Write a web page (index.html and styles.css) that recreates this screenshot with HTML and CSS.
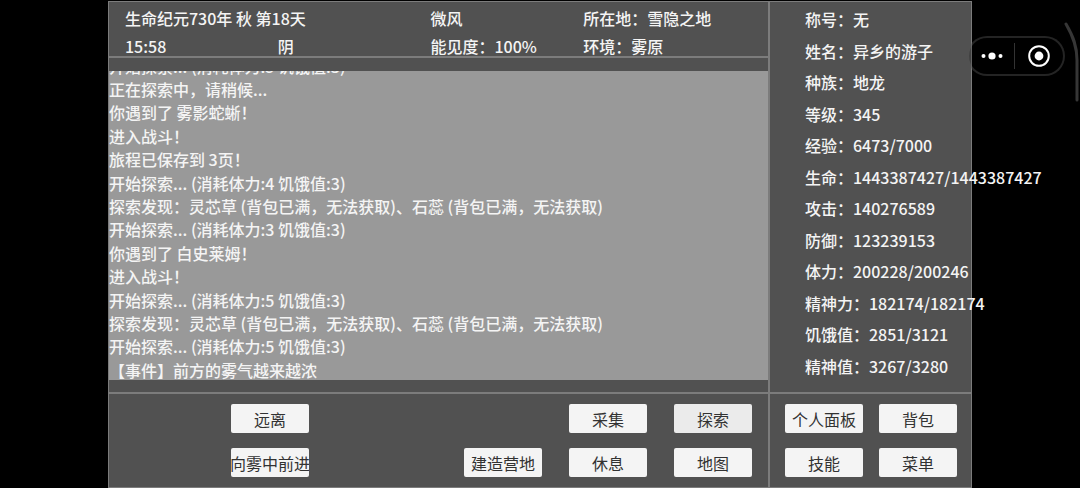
FILE: index.html
```
<!DOCTYPE html>
<html lang="zh-CN">
<head>
<meta charset="utf-8">
<title>生命纪元</title>
<link rel="stylesheet" href="styles.css">
</head>
<body>
<main class="game">
	<section class="world">
		<div class="status">
			<span class="date">生命纪元730年 秋 第18天</span>
			<span>微风</span>
			<span>所在地：雪隐之地</span>
			<span>15:58</span>
			<span>阴</span>
			<span>能见度：100%</span>
			<span>环境：雾原</span>
		</div>
		<div class="log">
			<ul>
				<li>开始探索... (消耗体力:5 饥饿值:3)</li>
				<li>正在探索中，请稍候...</li>
				<li>你遇到了 雾影蛇蜥！</li>
				<li>进入战斗！</li>
				<li>旅程已保存到 3页！</li>
				<li>开始探索... (消耗体力:4 饥饿值:3)</li>
				<li>探索发现：灵芯草 (背包已满，无法获取)、石蕊 (背包已满，无法获取)</li>
				<li>开始探索... (消耗体力:3 饥饿值:3)</li>
				<li>你遇到了 白史莱姆！</li>
				<li>进入战斗！</li>
				<li>开始探索... (消耗体力:5 饥饿值:3)</li>
				<li>探索发现：灵芯草 (背包已满，无法获取)、石蕊 (背包已满，无法获取)</li>
				<li>开始探索... (消耗体力:5 饥饿值:3)</li>
				<li>【事件】前方的雾气越来越浓</li>
			</ul>
		</div>
	</section>

	<ul class="stats">
		<li>称号：无</li>
		<li>姓名：异乡的游子</li>
		<li>种族：地龙</li>
		<li>等级：345</li>
		<li>经验：6473/7000</li>
		<li>生命：1443387427/1443387427</li>
		<li>攻击：140276589</li>
		<li>防御：123239153</li>
		<li>体力：200228/200246</li>
		<li>精神力：182174/182174</li>
		<li>饥饿值：2851/3121</li>
		<li>精神值：3267/3280</li>
	</ul>

	<section class="actions">
		<div class="move">
			<button type="button">远离</button>
			<button type="button">向雾中前进</button>
		</div>
		<div class="work">
			<button type="button" class="gather">采集</button>
			<button type="button" class="active">探索</button>
			<button type="button">建造营地</button>
			<button type="button">休息</button>
			<button type="button">地图</button>
		</div>
	</section>

	<nav class="menu">
		<button type="button">个人面板</button>
		<button type="button">背包</button>
		<button type="button">技能</button>
		<button type="button">菜单</button>
	</nav>
</main>

<div class="capsule">
	<button type="button" class="more" aria-label="更多">
		<svg width="24" height="24" viewBox="0 0 24 24" fill="#fff">
			<circle cx="3.5" cy="12" r="2"/>
			<circle cx="12" cy="12" r="3.6"/>
			<circle cx="20.5" cy="12" r="2"/>
		</svg>
	</button>
	<button type="button" class="close" aria-label="关闭">
		<svg width="24" height="24" viewBox="0 0 24 24">
			<circle cx="12" cy="12" r="9.8" fill="none" stroke="#fff" stroke-width="2"/>
			<circle cx="12" cy="12" r="4.4" fill="#fff"/>
		</svg>
	</button>
</div>
<svg class="edge" width="16" height="80" viewBox="0 0 16 80">
	<path d="M2 2C9 14 13 24 13 38V78" fill="none" stroke="#363636" stroke-width="3" stroke-linecap="round"/>
</svg>
</body>
</html>
```
FILE: styles.css
```
* {
	box-sizing: border-box;
}

body {
	margin: 0;
	padding: 1px 10% 0;
	background: #000;
	color: #f4f4f4;
	font: 500 16px/20px "Noto Sans CJK SC", sans-serif;
	overflow: hidden;
}

ul {
	list-style: none;
	margin: 0;
	padding: 0;
}

li, span {
	white-space: nowrap;
}

/* layout */
.game {
	display: grid;
	grid-template-columns: 1fr 203px;
	grid-template-rows: 1fr auto;
	height: calc(100vh - 1px);
	background: #515151;
	border: 1px solid #7c7c7c;
}

.world {
	display: flex;
	flex-direction: column;
	min-height: 0;
	padding-bottom: 12px;
}

.status {
	display: grid;
	grid-template-columns: repeat(4, 1fr);
	row-gap: 8px;
	padding: 6px 32px 0 16px;
	margin-bottom: 13px;
	border-bottom: 2px solid #7c7c7c;
}

.date {
	grid-column: span 2;
}

/* log, newest line at the bottom */
.log {
	flex: 1;
	min-height: 0;
	display: flex;
	align-items: flex-end;
	overflow: hidden;
	background: #999;
}

.log ul {
	display: flex;
	flex-direction: column;
	justify-content: space-between;
	flex: none;
	height: 105%;
}

.stats {
	display: flex;
	flex-direction: column;
	justify-content: space-between;
	padding: 7px 0 16px 35px;
	border-left: 2px solid #7c7c7c;
}

/* buttons */
.actions, .menu {
	border-top: 2px solid #7c7c7c;
}

.actions {
	display: flex;
	justify-content: space-between;
	padding: 10px 16px 10px 122px;
}

.move, .work, .menu {
	display: grid;
	align-content: start;
	row-gap: 15px;
}

.work {
	grid-template-columns: repeat(3, auto);
	column-gap: 27px;
}

.gather {
	grid-column: 2;
}

.menu {
	grid-template-columns: repeat(2, auto);
	justify-content: start;
	column-gap: 16px;
	padding: 10px 0 10px 15px;
	border-left: 2px solid #7c7c7c;
}

.game button {
	display: flex;
	justify-content: center;
	align-items: center;
	width: 78px;
	height: 29px;
	padding: 0;
	border: 0;
	border-radius: 2px;
	background: #f4f4f4;
	color: #323232;
	font: 400 16px/20px "Noto Sans CJK SC", sans-serif;
	white-space: nowrap;
	overflow: hidden;
}

.game .active {
	background: #ebebeb;
}

/* mini program capsule */
.capsule {
	position: absolute;
	top: 36px;
	right: 15px;
	display: flex;
	align-items: center;
	width: 98px;
	height: 40px;
	border: 2px solid rgba(120, 120, 120, 0.3);
	border-radius: 20px;
	background: rgba(0, 0, 0, 0.2);
}

.capsule button {
	display: flex;
	justify-content: center;
	padding: 0;
	border: 0;
	background: none;
}

.capsule .more {
	width: 45px;
}

.capsule .close {
	flex: 1;
	padding: 1px 0;
	border-left: 1px solid #333;
}

.edge {
	position: absolute;
	top: 22px;
	right: 0;
}
```
